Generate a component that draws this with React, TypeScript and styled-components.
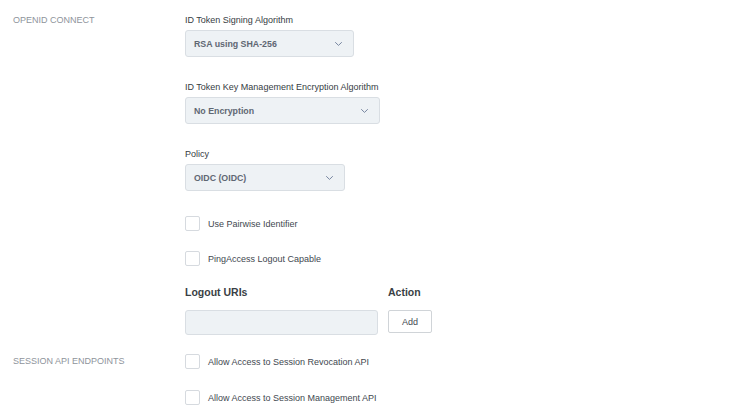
import styled, { createGlobalStyle } from "styled-components";

const GlobalStyle = createGlobalStyle`
  html, body {
    margin: 0;
    padding: 0;
    background: #ffffff;
  }
  body {
    font-family: "Liberation Sans", Arial, sans-serif;
  }
`;

const Page = styled.div`
  padding-top: 14px;
  width: 733px;
  min-height: 415px;
  box-sizing: border-box;
`;

const Section = styled.section`
  display: grid;
  grid-template-columns: 185px 1fr;
  align-items: start;
`;

const SectionTitle = styled.div<{ $lh: number; $top?: number }>`
  padding-left: 13px;
  margin-top: ${(p) => p.$top ?? 0}px;
  font-size: 9px;
  line-height: ${(p) => p.$lh}px;
  color: #8e949b;
  text-transform: uppercase;
`;

const Fields = styled.div`
  display: flex;
  flex-direction: column;
  align-items: flex-start;
`;

const Field = styled.div`
  display: flex;
  flex-direction: column;
  margin-bottom: 24px;
`;

const Label = styled.label`
  font-size: 9px;
  line-height: 12px;
  color: #363c43;
  margin-bottom: 4px;
`;

const SelectBox = styled.div<{ $w: number }>`
  width: ${(p) => p.$w}px;
  height: 27px;
  box-sizing: border-box;
  display: flex;
  align-items: center;
  justify-content: space-between;
  padding: 0 11px 0 8px;
  background: #eef2f5;
  border: 1px solid #d9dee3;
  border-radius: 3px;
  font-size: 8.8px;
  font-weight: bold;
  color: #5f6773;
`;

const CheckRow = styled.div<{ $gap: number }>`
  display: flex;
  align-items: center;
  gap: 8px;
  height: 15px;
  margin-top: ${(p) => p.$gap}px;
  font-size: 9px;
  color: #42484f;
`;

const Box = styled.span`
  width: 15px;
  height: 15px;
  box-sizing: border-box;
  border: 1px solid #d6dadf;
  border-radius: 2px;
  background: #fff;
`;

const UriTable = styled.div`
  display: grid;
  grid-template-columns: 193px 44px;
  column-gap: 10px;
  row-gap: 11px;
  margin-top: 20px;
  align-items: start;
`;

const ColHead = styled.div`
  font-size: 10.5px;
  line-height: 13px;
  font-weight: bold;
  color: #3a3f45;
`;

const UriInput = styled.div`
  height: 25px;
  box-sizing: border-box;
  background: #eef2f5;
  border: 1px solid #d9dee3;
  border-radius: 3px;
`;

const AddButton = styled.button`
  height: 23px;
  width: 44px;
  box-sizing: border-box;
  background: #fff;
  border: 1px solid #d0d4d8;
  border-radius: 2px;
  font-family: "Liberation Sans", Arial, sans-serif;
  font-size: 9px;
  color: #444a50;
  padding: 0;
`;

const Chevron = () => (
  <svg width="7" height="4" viewBox="0 0 7 4">
    <polyline
      points="0.5,0.5 3.5,3.4 6.5,0.5"
      fill="none"
      stroke="#7786a0"
      strokeWidth="1"
      strokeLinecap="round"
      strokeLinejoin="round"
    />
  </svg>
);

const Select = ({ value, width }: { value: string; width: number }) => (
  <SelectBox $w={width}>
    <span>{value}</span>
    <Chevron />
  </SelectBox>
);

const Check = ({ label, gap }: { label: string; gap: number }) => (
  <CheckRow $gap={gap}>
    <Box />
    <span>{label}</span>
  </CheckRow>
);

export default function App() {
  return (
    <>
      <GlobalStyle />
      <Page>
        <Section>
          <SectionTitle $lh={12}>OpenID Connect</SectionTitle>
          <Fields>
            <Field>
              <Label>ID Token Signing Algorithm</Label>
              <Select value="RSA using SHA-256" width={169} />
            </Field>
            <Field>
              <Label>ID Token Key Management Encryption Algorithm</Label>
              <Select value="No Encryption" width={195} />
            </Field>
            <Field>
              <Label>Policy</Label>
              <Select value="OIDC (OIDC)" width={160} />
            </Field>
            <Check label="Use Pairwise Identifier" gap={1} />
            <Check label="PingAccess Logout Capable" gap={20} />
            <UriTable>
              <ColHead>Logout URIs</ColHead>
              <ColHead>Action</ColHead>
              <UriInput />
              <AddButton>Add</AddButton>
            </UriTable>
          </Fields>
        </Section>
        <Section>
          <SectionTitle $lh={15} $top={19}>
            Session API Endpoints
          </SectionTitle>
          <Fields>
            <Check label="Allow Access to Session Revocation API" gap={19} />
            <Check label="Allow Access to Session Management API" gap={21} />
          </Fields>
        </Section>
      </Page>
    </>
  );
}
